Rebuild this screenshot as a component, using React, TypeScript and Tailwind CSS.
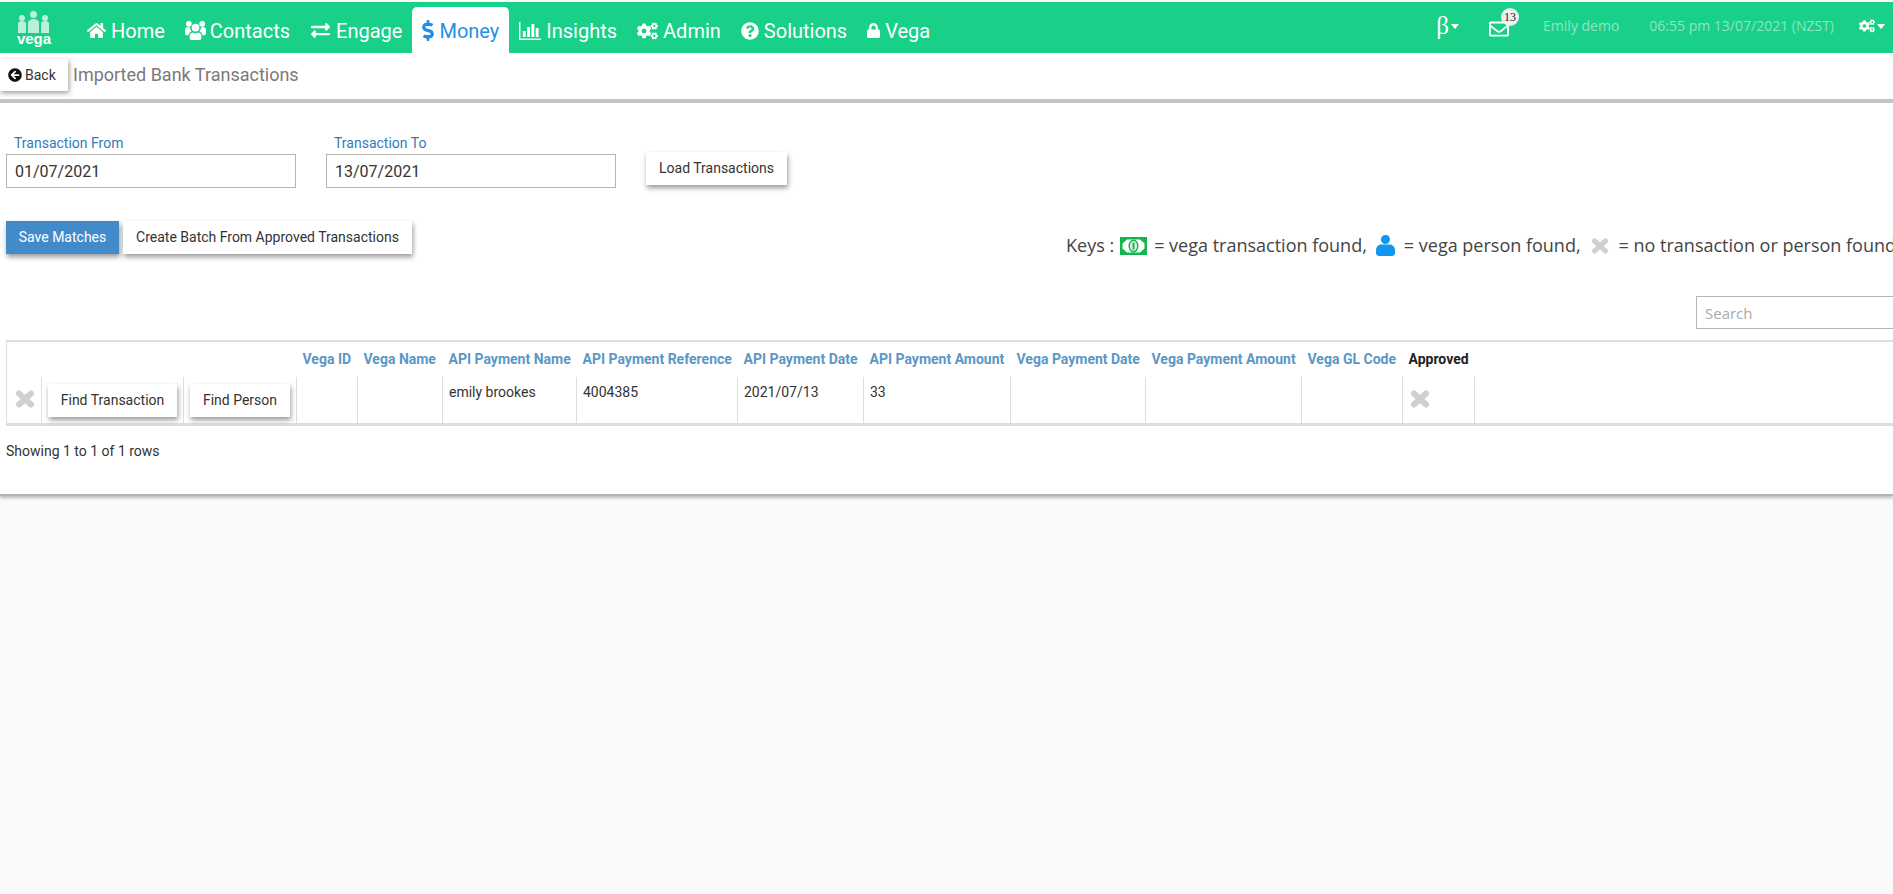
import {
  FaArrowCircleLeft,
  FaCogs,
  FaDollarSign,
  FaExchangeAlt,
  FaHome,
  FaLock,
  FaQuestionCircle,
  FaRegEnvelope,
} from 'react-icons/fa';

function UsersIcon() {
  return (
    <svg width="21" height="19" viewBox="0 0 22 20" fill="currentColor" preserveAspectRatio="none" className="-mr-[1px]">
      <circle cx="4" cy="3" r="3" />
      <circle cx="18" cy="3" r="3" />
      <circle cx="11" cy="7" r="4" />
      <path d="M0 9c0-1.500 1-2.500 2-2.500h3c.2 1.800.8 3.200 2 4.200-1.800.8-3 2.300-3.300 4.300H1.500C.5 15 0 14.200 0 13z" />
      <path d="M22 9c0-1.500-1-2.500-2-2.500h-3c-.2 1.800-.8 3.200-2 4.200 1.800.8 3 2.300 3.300 4.300h2.200c1 0 1.500-.8 1.500-2z" />
      <path d="M8 12c.8.600 1.900 1 3 1s2.200-.4 3-1c2 .4 3.200 2 3.200 4.300v1.200c0 1.500-1 2.500-2.500 2.500H7.300c-1.500 0-2.500-1-2.500-2.500v-1.200C4.800 14 6 12.400 8 12z" />
    </svg>
  );
}

function BarsIcon() {
  return (
    <svg width="22" height="18" viewBox="0 0 23 18" fill="currentColor" preserveAspectRatio="none">
      <rect x="0" y="0" width="1.500" height="18" />
      <rect x="0" y="16.500" width="23" height="1.500" />
      <rect x="4" y="9" width="3" height="6" />
      <rect x="8.500" y="5" width="3" height="10" />
      <rect x="13" y="2" width="3" height="13" />
      <rect x="17.500" y="6" width="3" height="9" />
    </svg>
  );
}

function RemoveIcon({ width, height }: { width: number; height: number }) {
  return (
    <svg width={width} height={height} viewBox="0 0 20 18" className="shrink-0">
      <path d="M4 3.500 16 14.500M16 3.500 4 14.500" stroke="#cfd0d0" strokeWidth="6" strokeLinecap="round" fill="none" />
    </svg>
  );
}

function PersonIcon() {
  return (
    <svg width="19" height="21" viewBox="0 0 19 21" fill="#1196f0" className="shrink-0 mx-[9px]">
      <ellipse cx="9.500" cy="4.500" rx="4.500" ry="4.500" />
      <path d="M0 15c0-3.500 3-5.500 5.500-5.500h8c2.500 0 5.500 2 5.500 5.500v3c0 2-1.500 3-3 3H3c-1.500 0-3-1-3-3z" />
    </svg>
  );
}

function Caret() {
  return <span className="w-0 h-0 border-x-[4.500px] border-x-transparent border-t-[5px] border-t-white" />;
}

const navItems = [
  { label: 'Home', icon: <FaHome className="w-[19px] h-[19px]" /> },
  { label: 'Contacts', icon: <UsersIcon /> },
  { label: 'Engage', icon: <FaExchangeAlt className="w-[21px] h-[19px]" /> },
  { label: 'Money', icon: <FaDollarSign className="w-[12px] h-[21px]" />, active: true },
  { label: 'Insights', icon: <BarsIcon /> },
  { label: 'Admin', icon: <FaCogs className="w-[21px] h-[20px]" /> },
  { label: 'Solutions', icon: <FaQuestionCircle className="w-[18px] h-[18px]" /> },
  { label: 'Vega', icon: <FaLock className="w-[13px] h-[17px]" /> },
];

const columns = [
  { label: '', width: 'w-[35px]' },
  { label: '', width: 'w-[142px]' },
  { label: '', width: 'w-[113px]' },
  { label: 'Vega ID', width: 'w-[61px]' },
  { label: 'Vega Name', width: 'w-[85px]' },
  { label: 'API Payment Name', width: 'w-[134px]' },
  { label: 'API Payment Reference', width: 'w-[161px]' },
  { label: 'API Payment Date', width: 'w-[126px]' },
  { label: 'API Payment Amount', width: 'w-[147px]' },
  { label: 'Vega Payment Date', width: 'w-[135px]' },
  { label: 'Vega Payment Amount', width: 'w-[156px]' },
  { label: 'Vega GL Code', width: 'w-[101px]' },
  { label: 'Approved', width: 'w-[72px]' },
  { label: '', width: 'w-auto' },
];

function Logo() {
  return (
    <div className="ml-[17px] mr-[26px] w-[34px] self-start flex flex-col items-center pt-[9px] text-white">
      <svg width="34" height="22" viewBox="0 0 34 22" fill="#bdf0dc">
        <circle cx="5" cy="7" r="3" />
        <path d="M1 13a4 3 0 0 1 8 0v9H1z" />
        <circle cx="16.500" cy="3.500" r="3.500" />
        <path d="M11 12a5.500 4 0 0 1 11 0v10H11z" />
        <circle cx="28" cy="7" r="3" />
        <path d="M24 13a4 3 0 0 1 8 0v9h-8z" />
      </svg>
      <span className="font-['Liberation_Sans',sans-serif] font-bold text-[15px] leading-[14px] -mt-[1px]">vega</span>
    </div>
  );
}

function NavBar() {
  return (
    <div className="h-[51px] bg-[#19d089] flex items-end text-white font-['Roboto',sans-serif] text-[20px]">
      <Logo />
      <div className="flex">
        {navItems.map((item) => (
          <div
            key={item.label}
            className={`h-[46px] px-[10px] pt-[1px] flex items-center gap-[5px] rounded-t-[5px] ${
              item.active ? 'bg-white text-[#1f8fe8]' : ''
            }`}
          >
            {item.icon}
            <span>{item.label}</span>
          </div>
        ))}
      </div>
      <div className="ml-auto h-full flex items-center font-['Open_Sans',sans-serif] text-[14px] text-[#8ce6c2] pb-[4px] pr-[8px]">
        <span className="font-['Liberation_Serif',serif] text-[25px] leading-none text-white">β</span>
        <span className="ml-[2px] mt-[2px] flex">
          <Caret />
        </span>
        <div className="relative ml-[30px] mr-[34px] mt-[7px] text-white">
          <FaRegEnvelope className="w-[20px] h-[20px]" />
          <span className="absolute -top-[11px] left-[12px] w-[18px] h-[18px] rounded-full bg-[#eeeef4] text-[#222] font-['Liberation_Serif',serif] text-[12px] leading-[18px] text-center">
            13
          </span>
        </div>
        <span>Emily demo</span>
        <span className="ml-[30px]">06:55 pm 13/07/2021 (NZST)</span>
        <FaCogs className="w-[16px] h-[14px] text-white ml-[25px]" />
        <span className="ml-[2px] mt-[2px] flex">
          <Caret />
        </span>
      </div>
    </div>
  );
}

function ShadowButton({ children, className = '' }: { children: React.ReactNode; className?: string }) {
  return (
    <button
      className={`h-[33px] shrink-0 bg-white text-[14px] pb-[1px] text-[#333] shadow-[1px_3px_5px_rgba(0,0,0,0.4)] font-['Roboto',sans-serif] ${className}`}
    >
      {children}
    </button>
  );
}

function DateField({ label, value, className = '' }: { label: string; value: string; className?: string }) {
  return (
    <div className={className}>
      <div className="ml-[8px] mb-[3px] h-[16px] text-[14px] leading-[16px] text-[#337ab7]">{label}</div>
      <input
        readOnly
        value={value}
        className="w-[290px] h-[34px] border border-[#b5b5b5] px-[8px] text-[16px] text-[#333] outline-none"
      />
    </div>
  );
}

function MoneyIcon() {
  return (
    <svg width="27" height="18" viewBox="0 0 27 18" className="shrink-0 ml-[6px] mr-[7px]">
      <rect width="27" height="18" fill="#12b64a" />
      <path d="M7 2.500h13l4.500 4v5l-4.500 4H7l-4.500-4v-5z" fill="#fff" />
      <ellipse cx="13.500" cy="9" rx="5" ry="6.500" fill="#12b64a" />
      <ellipse cx="13.500" cy="9" rx="3.500" ry="5" fill="#e3f5ea" />
      <rect x="12.500" y="5.500" width="2" height="7" fill="#12b64a" />
    </svg>
  );
}

function TransactionsTable() {
  const cell = 'border-r border-[#ddd] align-top px-[6px] pt-[5px]';
  return (
    <table className="ml-[6px] w-[1887px] table-fixed border-t-2 border-b-[3px] border-l border-[#ddd] text-[14px] text-[#333]">
      <colgroup>
        {columns.map((col, i) => (
          <col key={i} className={col.width} />
        ))}
      </colgroup>
      <thead>
        <tr className="h-[36px]">
          {columns.map((col, i) => (
            <th
              key={i}
              className={`px-[6px] text-left font-bold text-[14px] whitespace-nowrap ${
                col.label === 'Approved' ? 'text-[#222]' : 'text-[#5b97c5]'
              }`}
            >
              {col.label}
            </th>
          ))}
        </tr>
      </thead>
      <tbody>
        <tr className="h-[47px]">
          <td className="border-r border-[#ddd] pl-[8px] pt-[13px] align-top">
            <RemoveIcon width={20} height={18} />
          </td>
          <td className="border-r border-[#ddd] pl-[6px] pt-[7px] align-top">
            <ShadowButton className="w-[129px]">Find Transaction</ShadowButton>
          </td>
          <td className="border-r border-[#ddd] pl-[6px] pt-[7px] align-top">
            <ShadowButton className="w-[100px]">Find Person</ShadowButton>
          </td>
          <td className={cell}></td>
          <td className={cell}></td>
          <td className={cell}>emily brookes</td>
          <td className={cell}>4004385</td>
          <td className={cell}>2021/07/13</td>
          <td className={cell}>33</td>
          <td className={cell}></td>
          <td className={cell}></td>
          <td className={cell}></td>
          <td className="border-r border-[#ddd] pl-[7px] pt-[13px] align-top">
            <RemoveIcon width={20} height={18} />
          </td>
          <td></td>
        </tr>
      </tbody>
    </table>
  );
}

export default function App() {
  return (
    <div className="w-[1893px] h-[894px] overflow-hidden bg-[#fafafa] pt-[2px] font-['Roboto',sans-serif]">
      <NavBar />
      <div className="bg-white h-[50px] flex items-start gap-[5px] border-b-[4px] border-[#c4c4c4]">
        <button className="mt-[6px] w-[68px] h-[32px] pl-[8px] bg-white shadow-[1px_2px_5px_rgba(0,0,0,0.4)] flex items-center gap-[3px] text-[14px] text-[#333]">
          <FaArrowCircleLeft className="w-[14px] h-[14px] text-[#111]" />
          Back
        </button>
        <h1 className="mt-[12px] text-[18px] leading-[20px] text-[#7a7a7a]">Imported Bank Transactions</h1>
      </div>

      <div className="bg-white h-[393px] pt-[32px] border-b-[2px] border-[#b5b5b5] shadow-[0_2px_3px_rgba(0,0,0,0.25)]">
        <div className="flex items-start pl-[6px]">
          <DateField label="Transaction From" value="01/07/2021" />
          <DateField label="Transaction To" value="13/07/2021" className="ml-[30px]" />
          <ShadowButton className="ml-[30px] mt-[17px] w-[141px]">Load Transactions</ShadowButton>
        </div>

        <div className="flex items-start pl-[6px] mt-[33px] h-[75px]">
          <ShadowButton className="w-[113px] !bg-[#428bca] !text-white">Save Matches</ShadowButton>
          <ShadowButton className="ml-[4px] w-[289px]">Create Batch From Approved Transactions</ShadowButton>
          <div className="ml-[654px] mt-[11px] flex items-center whitespace-nowrap shrink-0 font-['Open_Sans',sans-serif] text-[18px] text-[#444]">
            <span>Keys :</span>
            <MoneyIcon />
            <span>= vega transaction found,</span>
            <PersonIcon />
            <span>= vega person found,</span>
            <span className="mx-[10px]">
              <RemoveIcon width={18} height={16} />
            </span>
            <span>= no transaction or person found</span>
          </div>
        </div>

        <div className="pl-[1696px]">
          <input
            readOnly
            placeholder="Search"
            className="w-[300px] h-[33px] border border-[#b5b5b5] px-[8px] text-[15px] font-['Open_Sans',sans-serif] placeholder:text-[#aaa] outline-none"
          />
        </div>

        <div className="mt-[11px]">
          <TransactionsTable />
        </div>
        <p className="ml-[6px] mt-[17px] text-[14px] leading-[16px] text-[#333]">Showing 1 to 1 of 1 rows</p>
      </div>
    </div>
  );
}
